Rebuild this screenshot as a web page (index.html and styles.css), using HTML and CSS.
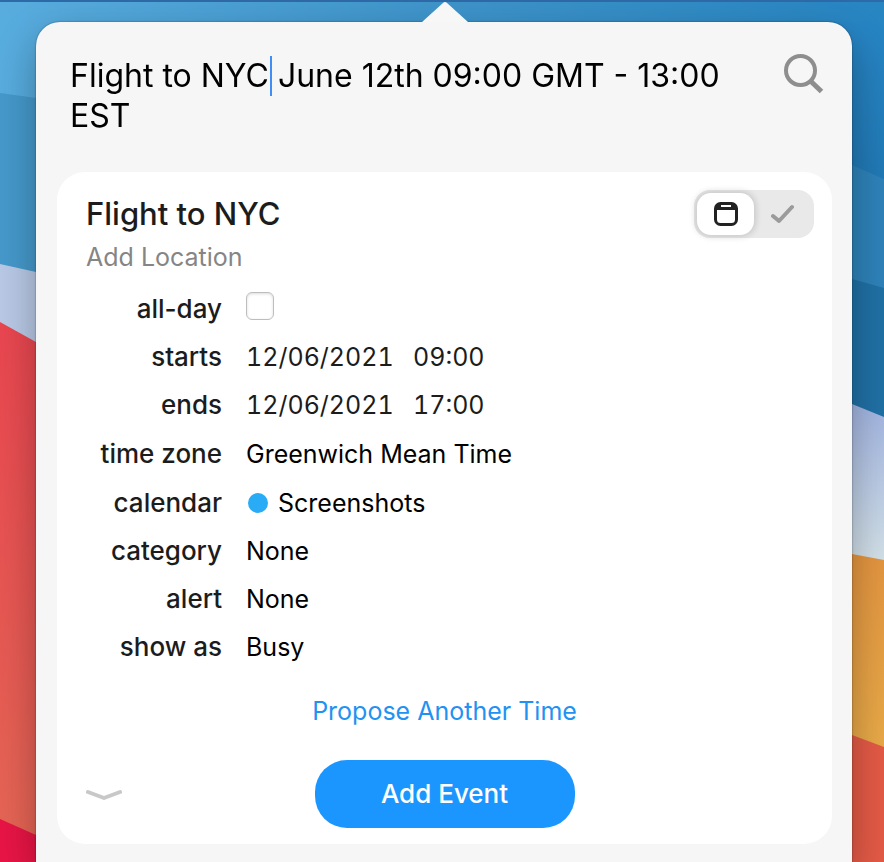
FILE: index.html
```html
<!DOCTYPE html>
<html lang="en">
<head>
<meta charset="utf-8">
<meta name="viewport" content="width=device-width, initial-scale=1">
<title>New Event</title>
<link rel="stylesheet" href="styles.css">
</head>
<body>
<svg class="wallpaper" viewBox="0 0 884 862" preserveAspectRatio="none" aria-hidden="true">
  <defs>
    <linearGradient id="sky"><stop offset="0" stop-color="#58addf"/><stop offset=".5" stop-color="#3e94ca"/><stop offset="1" stop-color="#2785c2"/></linearGradient>
    <linearGradient id="deep" x1="0" y1="0" x2="0" y2="1"><stop offset="0" stop-color="#2785c4"/><stop offset="1" stop-color="#2077b3"/></linearGradient>
    <linearGradient id="coral" x1="0" y1="0" x2="0" y2="1"><stop offset="0" stop-color="#e94650"/><stop offset="1" stop-color="#e56755"/></linearGradient>
    <linearGradient id="mist" x1="0" y1="0" x2="0" y2="1"><stop offset="0" stop-color="#9db0df"/><stop offset="1" stop-color="#d3e1e8"/></linearGradient>
    <linearGradient id="amber" x1="0" y1="0" x2="0" y2="1"><stop offset="0" stop-color="#e39440"/><stop offset="1" stop-color="#e8aa48"/></linearGradient>
  </defs>
  <rect width="884" height="862" fill="url(#sky)"/>
  <path d="M0 93L36 98 444 130V300H0z" fill="#4599cb"/>
  <path d="M0 264L36 272 444 360V500H0z" fill="#b9c9e6"/>
  <path d="M0 322L36 342 444 570V862H0z" fill="url(#coral)"/>
  <path d="M0 819L36 835 96 862H0z" fill="#e81545"/>
  <path d="M444 22H884V200H444z" fill="url(#deep)"/>
  <path d="M444 0L852 165 884 179V300H444z" fill="#2e82b9"/>
  <path d="M444 180L852 279 884 288V420H444z" fill="#2070a5"/>
  <path d="M820 391L852 404 884 417V562H820z" fill="url(#mist)"/>
  <path d="M820 550L852 554 884 560V750H820z" fill="url(#amber)"/>
  <path d="M444 580L852 735 884 747V862H444z" fill="#e35a46"/>
  <path d="M0 0H884V22H0z" fill="url(#sky)"/>
  <path d="M0 0H884V2H0z" fill="#2f6aa8"/>
</svg>
<main class="popover">
  <svg class="popover-arrow" width="48" height="21" viewBox="0 0 48 21" aria-hidden="true"><path d="M1 21L22 2Q24 0 26 2L47 21z" fill="#f7f7f7"/></svg>
  <form class="event-form">
    <div class="search">
      <div class="search-field">
        <textarea class="search-input" rows="2" spellcheck="false" aria-label="Describe event">Flight to NYC June 12th 09:00 GMT - 13:00 EST</textarea>
        <span class="caret"></span>
      </div>
      <button class="icon-button" type="button" aria-label="Search">
        <svg width="40" height="40" viewBox="0 0 40 40" fill="none" stroke="#8e8e8e"><circle cx="16.500" cy="16.500" r="14.500" stroke-width="4"/><path d="M26.500 27L37.500 37.500" stroke-width="5"/></svg>
      </button>
    </div>
    <section class="card">
      <header class="card-header">
        <div class="heading">
          <input class="title" aria-label="Title" value="Flight to NYC">
          <input class="location" aria-label="Location" placeholder="Add Location">
        </div>
        <div class="toggle">
          <button class="toggle-option selected" type="button" aria-label="Event" aria-pressed="true">
            <svg width="24" height="24" viewBox="0 0 24 24"><rect x="1.500" y="1.500" width="21" height="21" rx="5" fill="none" stroke="#222" stroke-width="3"/><path d="M2 8V5Q3 1 7 1H17Q21 1 22 5V8z" fill="#222"/><path d="M7 4H17" stroke="#fff" stroke-width="2"/></svg>
          </button>
          <button class="toggle-option" type="button" aria-label="Task" aria-pressed="false">
            <svg width="24" height="24" viewBox="0 0 24 24" fill="none" stroke="#9b9b9b" stroke-width="4" stroke-linecap="round" stroke-linejoin="round"><path d="M2 14L8 19 21 5"/></svg>
          </button>
        </div>
      </header>
      <div class="fields">
        <label for="all-day">all-day</label>
        <div class="value"><input class="checkbox" id="all-day" type="checkbox"></div>
        <label for="start-date">starts</label>
        <div class="value dates"><input class="date" id="start-date" value="12/06/2021"><input class="time" aria-label="Start time" value="09:00"></div>
        <label for="end-date">ends</label>
        <div class="value dates"><input class="date" id="end-date" value="12/06/2021"><input class="time" aria-label="End time" value="17:00"></div>
        <label for="zone">time zone</label>
        <div class="value"><select id="zone"><option>Greenwich Mean Time</option></select></div>
        <label for="calendar">calendar</label>
        <div class="value"><span class="dot"></span><select id="calendar"><option>Screenshots</option></select></div>
        <label for="category">category</label>
        <div class="value"><select id="category"><option>None</option></select></div>
        <label for="alert">alert</label>
        <div class="value"><select id="alert"><option>None</option></select></div>
        <label for="show-as">show as</label>
        <div class="value"><select id="show-as"><option>Busy</option></select></div>
      </div>
      <a class="propose" href="#propose">Propose Another Time</a>
      <footer class="actions">
        <button class="icon-button" type="button" aria-label="Collapse">
          <svg width="36" height="12" viewBox="0 0 36 12" fill="none" stroke="#c8c8c8" stroke-width="4" stroke-linecap="round" stroke-linejoin="round"><path d="M2 4L18 10 34 4"/></svg>
        </button>
        <button class="add" type="submit">Add Event</button>
      </footer>
    </section>
  </form>
</main>
</body>
</html>
```
FILE: styles.css
```css
* { box-sizing: border-box; }
body {
  margin: 0;
  min-height: 100vh;
  display: flex;
  flex-direction: column;
  overflow: hidden;
  font-family: Inter, "Liberation Sans", sans-serif;
  font-size: 25px;
  line-height: 32px;
  color: #1c1c1c;
}
input, select, textarea, button {
  margin: 0;
  padding: 0;
  border: 0;
  outline: 0;
  background: none;
  font: inherit;
  color: inherit;
}
svg { display: block; }
.wallpaper { position: fixed; inset: 0; z-index: -1; width: 100%; height: 100%; }
.popover {
  position: relative;
  flex: 1;
  margin: 22px 32px 0 36px;
  padding: 32px 20px 18px 21px;
  background: #f6f6f6;
  border-radius: 24px 24px 0 0;
  box-shadow: 0 0 2px rgba(0, 0, 0, .5), 0 16px 40px rgba(0, 0, 0, .3);
}
.popover-arrow { position: absolute; bottom: 100%; left: 50%; margin-left: -23px; }
.search {
  display: flex;
  align-items: flex-start;
  justify-content: space-between;
  gap: 24px;
  padding: 0 8px 36px 13px;
}
.search-field { position: relative; flex: 1; margin-top: 2px; }
.search-input {
  display: block;
  width: 100%;
  height: 80px;
  resize: none;
  overflow: hidden;
  font-size: 32px;
  line-height: 40px;
  color: #000;
}
.caret { position: absolute; top: 0; left: 200px; width: 2px; height: 40px; background: #3f8ef5; }
.icon-button { display: block; }
.card { padding: 18px 29px 16px; background: #fff; border-radius: 28px; }
.card-header { display: flex; align-items: flex-start; justify-content: space-between; margin-right: -11px; }
.heading { display: flex; flex: 1; flex-direction: column; gap: 6px; padding-top: 3px; }
.title { width: 100%; height: 40px; font-size: 31px; font-weight: 500; }
.location { width: 100%; height: 36px; }
.location::placeholder { color: #858585; opacity: 1; }
.toggle { display: flex; padding: 3px; background: #e9e9e9; border-radius: 16px; }
.toggle-option { display: grid; place-items: center; width: 57px; height: 42px; border-radius: 14px; }
.toggle-option.selected { background: #fff; box-shadow: 0 0 6px 2px rgba(0, 0, 0, .14); }
.fields {
  display: grid;
  grid-template-columns: 136px 1fr;
  grid-template-rows: repeat(3, 48px) 50px;
  grid-auto-rows: 48px;
  column-gap: 24px;
  align-items: center;
  padding-top: 10px;
}
.fields label { text-align: right; font-size: 26px; font-weight: 500; }
.value { display: flex; align-items: center; color: #000; }
.value select { appearance: none; height: 40px; }
.checkbox {
  appearance: none;
  width: 28px;
  height: 28px;
  margin-bottom: 6px;
  border: 1px solid #bdbdbd;
  border-radius: 6px;
  box-shadow: inset 0 1px 3px rgba(0, 0, 0, .14);
}
.dates { gap: 12px; color: #1c1c1c; font-variant-numeric: tabular-nums; }
.date { width: 155px; }
.time { width: 90px; }
.dot { width: 20px; height: 20px; margin: 0 10px 0 2px; border-radius: 50%; background: #2aabf5; }
.propose { display: block; width: fit-content; margin: 24px auto 33px; color: #1f92f2; text-decoration: none; }
.actions { display: grid; grid-template-columns: 1fr 260px 1fr; align-items: center; }
.add { height: 68px; border-radius: 32px; background: #1c96ff; color: #fff; font-size: 26px; font-weight: 500; }
```
